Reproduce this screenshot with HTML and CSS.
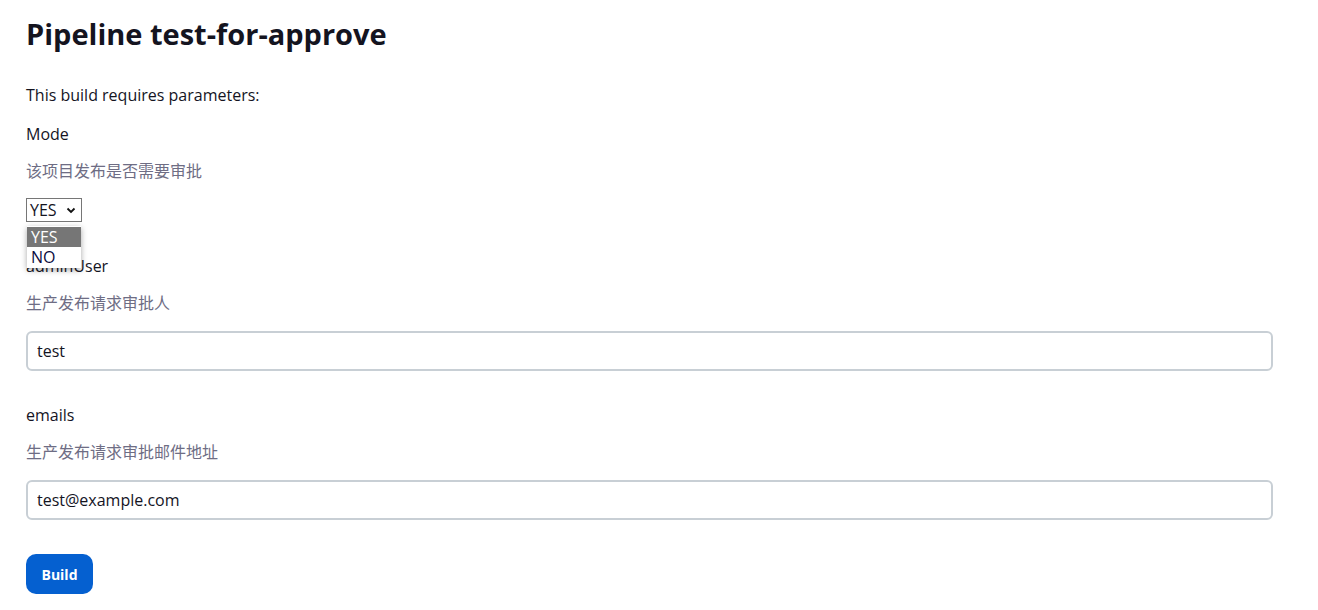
FILE: index.html
```html
<!DOCTYPE html>
<html lang="en">
<head>
<meta charset="utf-8">
<title>Pipeline test-for-approve</title>
<link rel="stylesheet" href="styles.css">
</head>
<body>
<main class="page">
  <h1 class="title">Pipeline test-for-approve</h1>
  <p class="intro">This build requires parameters:</p>

  <section class="param">
    <div class="param-name">Mode</div>
    <div class="param-desc">该项目发布是否需要审批</div>
    <div class="select-wrap">
      <div class="select">
        <span>YES</span>
        <svg class="chev" width="10" height="8" viewBox="0 0 10 8"><path d="M1.5 2.5 L5 6 L8.5 2.5" fill="none" stroke="#111" stroke-width="1.8"/></svg>
      </div>
      <ul class="options">
        <li class="option selected">YES</li>
        <li class="option">NO</li>
      </ul>
    </div>
  </section>

  <section class="param">
    <div class="param-name">adminUser</div>
    <div class="param-desc">生产发布请求审批人</div>
    <input class="text-input" type="text" value="test">
  </section>

  <section class="param">
    <div class="param-name">emails</div>
    <div class="param-desc">生产发布请求审批邮件地址</div>
    <input class="text-input" type="text" value="test@example.com">
  </section>

  <button class="build-btn" type="button">Build</button>
</main>
</body>
</html>
```
FILE: styles.css
```css
html, body {
  margin: 0;
  padding: 0;
  background: #fff;
}
body {
  font-family: "Open Sans", "Noto Sans CJK SC", sans-serif;
  color: #14141f;
  font-size: 16px;
}
.page {
  padding: 16px 45px 0 26px;
  display: flex;
  flex-direction: column;
  align-items: flex-start;
}
.title {
  margin: 0;
  font-size: 29px;
  line-height: 36px;
  font-weight: 700;
}
.intro {
  margin: 31px 0 0;
  line-height: 24px;
}
.param {
  margin-top: 15px;
  display: flex;
  flex-direction: column;
  align-items: flex-start;
  width: 100%;
}
.param + .param {
  margin-top: 32px;
}
.param-name {
  line-height: 24px;
}
.param-desc {
  margin-top: 12px;
  line-height: 24px;
  color: #6e6d84;
  font-family: "Noto Sans CJK SC", sans-serif;
  font-size: 16px;
}
.select-wrap {
  position: relative;
  margin-top: 16px;
}
.select {
  box-sizing: border-box;
  width: 56px;
  height: 24px;
  border: 1px solid #767676;
  display: flex;
  align-items: center;
  justify-content: space-between;
  padding: 0 5px 0 3px;
  font-size: 16px;
}
.options {
  position: absolute;
  left: 1px;
  top: 28px;
  width: 54px;
  margin: 0;
  padding: 1px 0;
  list-style: none;
  background: #fff;
  box-shadow: 0 2px 6px rgba(0,0,0,0.35);
  z-index: 2;
}
.option {
  height: 20px;
  line-height: 20px;
  padding-left: 4px;
  font-size: 16px;
  color: #0a0a40;
}
.option.selected {
  background: #767676;
  color: #fff;
}
.text-input {
  box-sizing: border-box;
  margin-top: 17px;
  width: 100%;
  height: 40px;
  border: 2px solid #c8cfd5;
  border-radius: 6px;
  padding: 0 9px;
  font-family: "Open Sans", sans-serif;
  font-size: 16px;
  color: #14141f;
  outline: none;
}
.build-btn {
  margin-top: 34px;
  height: 40px;
  width: 67px;
  border: none;
  border-radius: 10px;
  background: #0560d0;
  color: #fff;
  font-family: "Open Sans", sans-serif;
  font-weight: 700;
  font-size: 14px;
  padding: 0;
}
```
